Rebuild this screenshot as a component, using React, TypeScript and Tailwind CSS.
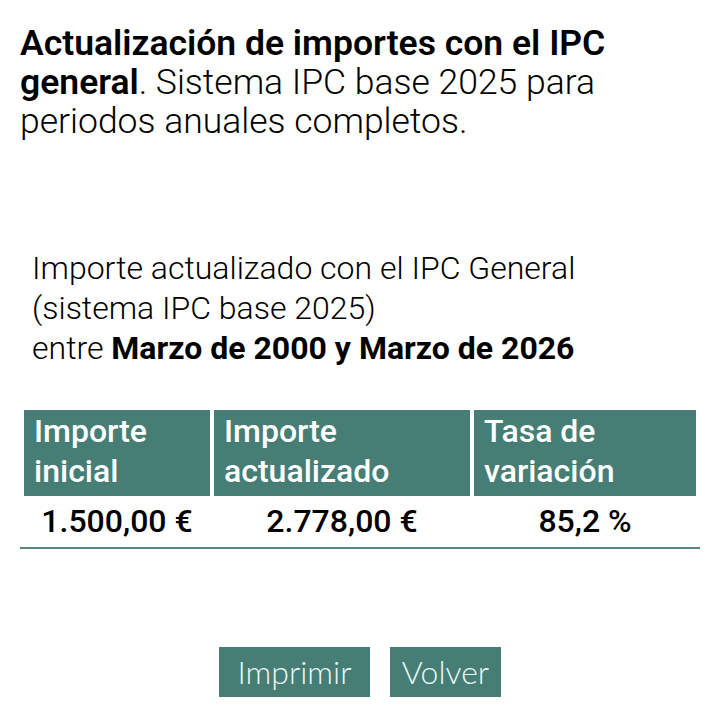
import React from "react";

export default function App() {
  const th = "bg-[#467e75] text-white text-left font-medium text-[32px] leading-[40px] px-[10px] pt-[1px] pb-[5px] align-top";
  const td = "text-center font-medium text-[32px] leading-[40px] text-black pt-[1px] pb-[2px]";
  return (
    <div className="w-[720px] h-[720px] bg-white overflow-hidden" style={{ fontFamily: "Roboto, 'Liberation Sans', sans-serif" }}>
      <div className="px-5 pt-[24px]">
        <p className="text-[35.5px] leading-[39px] font-light text-black">
          <span className="font-semibold">Actualización de importes con el IPC general</span>. Sistema IPC base 2025 para periodos anuales completos.
        </p>
      </div>
      <div className="pl-[32px] mt-[107px] text-[32px] leading-[40px] font-light text-black">
        <div>Importe actualizado con el IPC General</div>
        <div>(sistema IPC base 2025)</div>
        <div>
          entre <span className="font-bold">Marzo de 2000 y Marzo de 2026</span>
        </div>
      </div>
      <div className="px-5 mt-[38px]">
        <table className="w-[680px] border-separate border-spacing-[4px] border-b-2 border-[#5a8580]">
          <thead>
            <tr>
              <th className={`w-[186px] ${th}`}>Importe inicial</th>
              <th className={`w-[256px] ${th}`}>Importe actualizado</th>
              <th className={th}>Tasa de variación</th>
            </tr>
          </thead>
          <tbody>
            <tr>
              <td className={td}>1.500,00 €</td>
              <td className={td}>2.778,00 €</td>
              <td className={td}>85,2 %</td>
            </tr>
          </tbody>
        </table>
      </div>
      <div className="flex justify-center gap-5 mt-[98px]" style={{ fontFamily: "Lato, sans-serif" }}>
        <button className="bg-[#467d75] text-[#ecfaf8] text-[32px] font-light h-[50px] w-[151px] leading-[50px]">Imprimir</button>
        <button className="bg-[#467d75] text-[#ecfaf8] text-[32px] font-light h-[50px] w-[111px] leading-[50px]">Volver</button>
      </div>
    </div>
  );
}
